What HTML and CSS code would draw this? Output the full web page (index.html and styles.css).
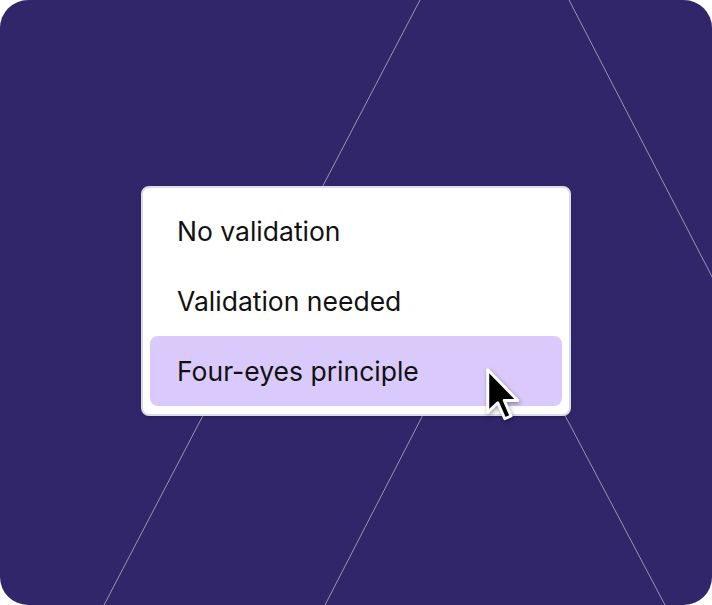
FILE: index.html
```html
<!DOCTYPE html>
<html>
	<head>
		<meta charset="UTF-8">
		<title>Validation menu</title>
		<link rel="stylesheet" href="styles.css">
	</head>
	<body>

		<div class="frame">
			<!-- background strokes -->
			<svg class="strokes" width="712" height="605" viewBox="0 0 712 605">
				<line x1="420" y1="0" x2="104" y2="605"/>
				<line x1="569" y1="0" x2="860" y2="563"/>
				<line x1="493" y1="279" x2="325" y2="605"/>
				<line x1="493" y1="279" x2="665" y2="605"/>
			</svg>

			<ul class="menu">
				<li class="item">No validation</li>
				<li class="item">Validation needed</li>
				<li class="item active">Four-eyes principle</li>
			</ul>

			<svg class="cursor" width="40" height="60" viewBox="-1.5 -1.5 16 24">
				<path d="M0 0 V17 L4 13.2 L6.8 19.6 L9.3 18.5 L6.6 12.3 H12 Z"/>
			</svg>
		</div>

	</body>
</html>
```

FILE: styles.css
```css
*{
	margin: 0;
	padding: 0;
}
body{
	background: #fff;
	font-family: Inter, "Noto Sans", sans-serif;
}
.frame{
	position: relative;
	width: 712px;
	height: 605px;
	border-radius: 28px;
	background: #31266a;
	overflow: hidden;
	display: flex;
	align-items: center;
	justify-content: center;
}
.strokes{
	position: absolute;
	left: 0;
	top: 0;
}
.strokes line{
	stroke: rgba(255,255,255,.5);
	stroke-width: 1;
}
.menu{
	position: relative;
	width: 430px;
	box-sizing: border-box;
	margin-bottom: 3px;
	padding: 8px 7px;
	background: #fff;
	border: 2px solid #dcdce6;
	border-radius: 8px;
	box-shadow: 0 2px 3px rgba(0,0,0,.15);
	list-style: none;
}
.item{
	height: 70px;
	display: flex;
	align-items: center;
	padding-left: 27px;
	border-radius: 8px;
	font-size: 26.5px;
	color: #111;
}
.item.active{
	background: #dac9fb;
}
.cursor{
	position: absolute;
	left: 484px;
	top: 366px;
	filter: drop-shadow(1px 2px 2px rgba(0,0,0,.35));
}
.cursor path{
	fill: #000;
	stroke: #fff;
	stroke-width: 1.2;
	stroke-linejoin: round;
}
```
